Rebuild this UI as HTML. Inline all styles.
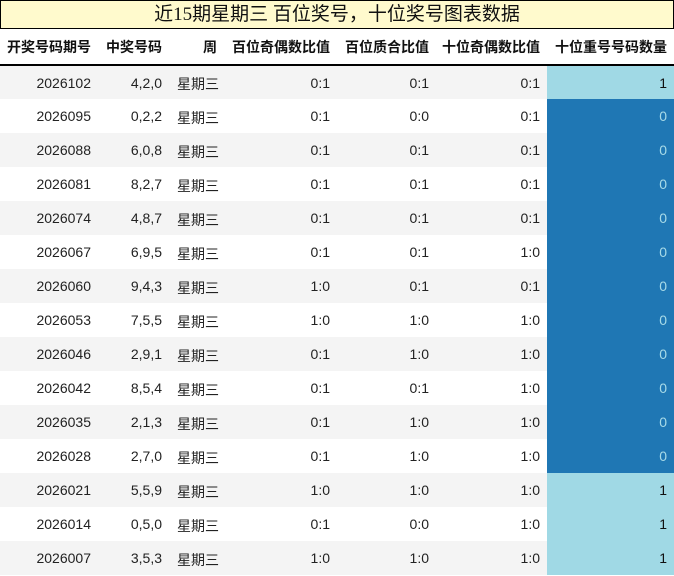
<!DOCTYPE html>
<html><head><meta charset="utf-8"><style>
*{margin:0;padding:0;box-sizing:border-box}
body{width:674px;height:576px;background:#fff;font-family:"Liberation Sans","Noto Sans CJK SC",sans-serif;font-size:14px;color:#222;overflow:hidden;position:relative}
.title{position:absolute;left:0;top:0;width:674px;height:29px;background:#fffacd;border:1px solid #000;text-align:center;font-family:"Liberation Serif","Noto Sans CJK SC",serif;font-size:19px;line-height:28px;color:#111}
table{position:absolute;top:29px;left:0;border-collapse:collapse;width:674px;table-layout:fixed}
th{height:36px;font-weight:bold;text-align:right;padding-right:7px;border-bottom:2px solid #000;white-space:nowrap;font-size:14px;color:#111}
td{height:34px;text-align:right;padding-right:7px;white-space:nowrap}
tr.g td{background:#f4f4f4}
td.w{text-align:left;padding-left:8px;padding-top:3px}
td.l{background:#a0d9e5!important;color:#111}
td.d{background:#1f77b4!important;color:#a8dbe8}
</style></head><body>
<div class="title">近15期星期三 百位奖号，十位奖号图表数据</div>
<table>
<colgroup><col style="width:98px"><col style="width:71px"><col style="width:55px"><col style="width:113px"><col style="width:99px"><col style="width:111px"><col style="width:127px"></colgroup>
<tr><th>开奖号码期号</th><th>中奖号码</th><th>周</th><th>百位奇偶数比值</th><th>百位质合比值</th><th>十位奇偶数比值</th><th>十位重号号码数量</th></tr>
<tr class="g"><td>2026102</td><td>4,2,0</td><td class="w">星期三</td><td>0:1</td><td>0:1</td><td>0:1</td><td class="l">1</td></tr>
<tr><td>2026095</td><td>0,2,2</td><td class="w">星期三</td><td>0:1</td><td>0:0</td><td>0:1</td><td class="d">0</td></tr>
<tr class="g"><td>2026088</td><td>6,0,8</td><td class="w">星期三</td><td>0:1</td><td>0:1</td><td>0:1</td><td class="d">0</td></tr>
<tr><td>2026081</td><td>8,2,7</td><td class="w">星期三</td><td>0:1</td><td>0:1</td><td>0:1</td><td class="d">0</td></tr>
<tr class="g"><td>2026074</td><td>4,8,7</td><td class="w">星期三</td><td>0:1</td><td>0:1</td><td>0:1</td><td class="d">0</td></tr>
<tr><td>2026067</td><td>6,9,5</td><td class="w">星期三</td><td>0:1</td><td>0:1</td><td>1:0</td><td class="d">0</td></tr>
<tr class="g"><td>2026060</td><td>9,4,3</td><td class="w">星期三</td><td>1:0</td><td>0:1</td><td>0:1</td><td class="d">0</td></tr>
<tr><td>2026053</td><td>7,5,5</td><td class="w">星期三</td><td>1:0</td><td>1:0</td><td>1:0</td><td class="d">0</td></tr>
<tr class="g"><td>2026046</td><td>2,9,1</td><td class="w">星期三</td><td>0:1</td><td>1:0</td><td>1:0</td><td class="d">0</td></tr>
<tr><td>2026042</td><td>8,5,4</td><td class="w">星期三</td><td>0:1</td><td>0:1</td><td>1:0</td><td class="d">0</td></tr>
<tr class="g"><td>2026035</td><td>2,1,3</td><td class="w">星期三</td><td>0:1</td><td>1:0</td><td>1:0</td><td class="d">0</td></tr>
<tr><td>2026028</td><td>2,7,0</td><td class="w">星期三</td><td>0:1</td><td>1:0</td><td>1:0</td><td class="d">0</td></tr>
<tr class="g"><td>2026021</td><td>5,5,9</td><td class="w">星期三</td><td>1:0</td><td>1:0</td><td>1:0</td><td class="l">1</td></tr>
<tr><td>2026014</td><td>0,5,0</td><td class="w">星期三</td><td>0:1</td><td>0:0</td><td>1:0</td><td class="l">1</td></tr>
<tr class="g"><td>2026007</td><td>3,5,3</td><td class="w">星期三</td><td>1:0</td><td>1:0</td><td>1:0</td><td class="l">1</td></tr>
</table>
</body></html>
